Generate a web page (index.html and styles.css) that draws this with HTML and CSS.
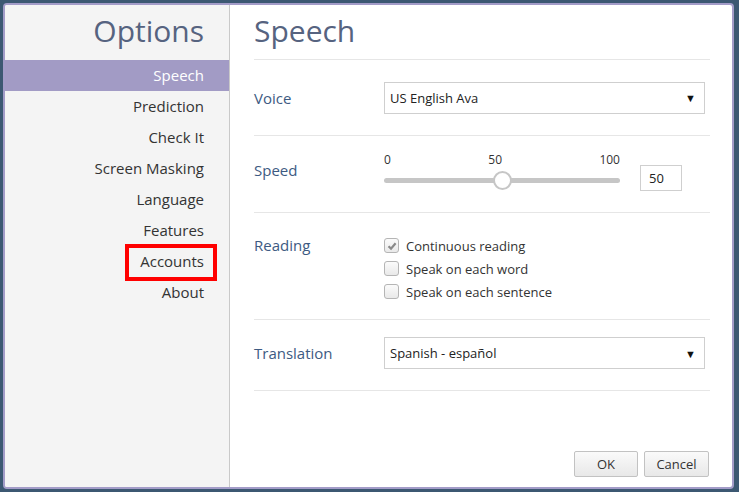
FILE: index.html
```html
<!DOCTYPE html>
<html lang="en">
<head>
    <meta charset="UTF-8">
    <meta name="viewport" content="width=device-width, initial-scale=1.0">
    <title>Options</title>
    <link rel="stylesheet" href="styles.css">
</head>
<body>
    <div class="dialog">
        <div class="sidebar">
            <h1 class="side-title">Options</h1>
            <ul class="nav">
                <li class="active">Speech</li>
                <li>Prediction</li>
                <li>Check It</li>
                <li>Screen Masking</li>
                <li>Language</li>
                <li>Features</li>
                <li><span class="marked">Accounts</span></li>
                <li>About</li>
            </ul>
        </div>

        <div class="main">
            <h2 class="main-title">Speech</h2>

            <div class="row row-voice">
                <div class="label">Voice</div>
                <div class="select">
                    <span>US English Ava</span>
                    <span class="arrow">&#9660;</span>
                </div>
            </div>

            <div class="row row-speed">
                <div class="label">Speed</div>
                <div class="slider">
                    <div class="ticks">
                        <span>0</span>
                        <span>50</span>
                        <span>100</span>
                    </div>
                    <div class="track">
                        <div class="thumb"></div>
                    </div>
                </div>
                <div class="num">50</div>
            </div>

            <div class="row row-reading">
                <div class="label">Reading</div>
                <div class="checks">
                    <div class="check">
                        <span class="box">
                            <svg width="10" height="10" viewBox="0 0 10 10"><path d="M1.5 5.2 L4 7.6 L8.6 2.2" fill="none" stroke="#8a8a8a" stroke-width="2.2"/></svg>
                        </span>
                        Continuous reading
                    </div>
                    <div class="check"><span class="box"></span>Speak on each word</div>
                    <div class="check"><span class="box"></span>Speak on each sentence</div>
                </div>
            </div>

            <div class="row row-trans">
                <div class="label">Translation</div>
                <div class="select">
                    <span>Spanish - español</span>
                    <span class="arrow">&#9660;</span>
                </div>
            </div>

            <div class="footer">
                <button class="btn btn-ok">OK</button>
                <button class="btn">Cancel</button>
            </div>
        </div>
    </div>
</body>
</html>
```

FILE: styles.css
```css
body {
    margin: 0;
    padding: 3px;
    background: #3c5872;
    font-family: "Open Sans", "Liberation Sans", sans-serif;
}

.dialog {
    box-sizing: border-box;
    width: 731px;
    height: 486px;
    display: flex;
    background: white;
    border: 2px solid #a39cc8;
    border-radius: 4px;
    overflow: hidden;
}

/* left column */
.sidebar {
    width: 224px;
    background: #f4f4f4;
    border-right: 1px solid #c9c9c9;
}

.side-title {
    margin: 0;
    height: 55px;
    padding-right: 25px;
    text-align: right;
    font-weight: 400;
    font-size: 30px;
    line-height: 52px;
    color: #566380;
}

.nav {
    list-style: none;
    margin: 0;
    padding: 0;
}

.nav li {
    height: 31px;
    line-height: 31px;
    padding-right: 25px;
    text-align: right;
    font-size: 15px;
    color: #333;
}

.nav li.active {
    background: #a29bc5;
    color: white;
}

.marked {
    position: relative;
    display: inline-block;
}

.marked::after {
    content: "";
    position: absolute;
    left: -15px;
    right: -13px;
    top: -2px;
    bottom: -4px;
    border: 4px solid #f00;
}

/* right column */
.main {
    flex: 1;
    display: flex;
    flex-direction: column;
    padding: 0 22px 0 24px;
}

.main-title {
    margin: 0;
    height: 54px;
    font-weight: 400;
    font-size: 30px;
    line-height: 52px;
    color: #566380;
    border-bottom: 1px solid #e6e6e6;
}

.row {
    display: flex;
    align-items: center;
    padding-right: 5px;
    border-bottom: 1px solid #e6e6e6;
}

.label {
    width: 130px;
    flex-shrink: 0;
    font-size: 15px;
    line-height: 22px;
    color: #3d5a82;
}

.row-voice { height: 75px; }

.row-speed {
    align-items: flex-start;
    box-sizing: border-box;
    height: 77px;
    padding-top: 15px;
}

.row-speed .label {
    margin-top: 8px;
}

.row-reading {
    align-items: flex-start;
    box-sizing: border-box;
    height: 107px;
    padding-top: 21px;
}

.row-trans {
    align-items: flex-start;
    box-sizing: border-box;
    height: 71px;
    padding-top: 17px;
}

.row-trans .label {
    margin-top: 5px;
}

.select {
    flex: 1;
    height: 32px;
    box-sizing: border-box;
    border: 1px solid #cfcfcf;
    padding: 0 8px 0 5px;
    display: flex;
    align-items: center;
    justify-content: space-between;
    font-size: 13px;
    color: #222;
}

.arrow {
    font-size: 11px;
    color: #111;
}

/* speed slider */
.slider {
    width: 236px;
}

.ticks {
    display: flex;
    justify-content: space-between;
    font-size: 12px;
    line-height: 17px;
    color: #333;
    height: 17px;
}

.track {
    position: relative;
    height: 5px;
    margin-top: 10px;
    background: #c6c6c6;
    border-radius: 3px;
}

.thumb {
    position: absolute;
    left: 109px;
    top: -7px;
    width: 15px;
    height: 15px;
    border: 2px solid #c6c6c6;
    border-radius: 50%;
    background: white;
}

.num {
    box-sizing: border-box;
    width: 42px;
    height: 26px;
    margin-left: 20px;
    margin-top: 14px;
    border: 1px solid #cfcfcf;
    padding-left: 8px;
    line-height: 24px;
    font-size: 13px;
    color: #222;
}

/* checkboxes */
.check {
    display: flex;
    align-items: center;
    height: 23px;
    font-size: 13px;
    color: #333;
}

.box {
    box-sizing: border-box;
    width: 15px;
    height: 15px;
    margin-right: 7px;
    border: 1px solid #b5b5b5;
    border-radius: 3px;
    background: linear-gradient(#fbfbfb, #e9e9e9);
    display: flex;
    align-items: center;
    justify-content: center;
}

/* buttons */
.footer {
    margin-top: auto;
    display: flex;
    justify-content: flex-end;
    gap: 6px;
    padding: 0 1px 10px 0;
}

.btn {
    height: 26px;
    width: 65px;
    border: 1px solid #c2c2c2;
    border-radius: 2px;
    background: linear-gradient(#fafafa, #e8e8e8);
    font-family: "Open Sans", "Liberation Sans", sans-serif;
    font-size: 13px;
    color: #333;
}

.btn-ok {
    width: 64px;
}
```
